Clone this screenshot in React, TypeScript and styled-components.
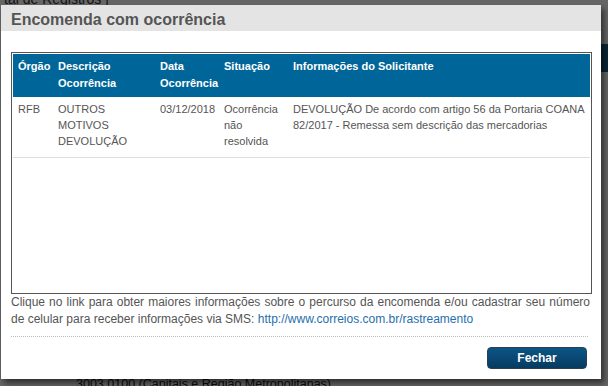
import styled, { createGlobalStyle } from 'styled-components';

const GlobalStyle = createGlobalStyle`
  html, body {
    margin: 0;
    padding: 0;
    width: 608px;
    height: 386px;
    overflow: hidden;
    background: #ffffff;
    font-family: "Liberation Sans", Arial, sans-serif;
  }
`;

const Page = styled.div`
  position: relative;
  width: 608px;
  height: 386px;
  overflow: hidden;
  background: #fff;
`;

const PageCrumb = styled.div`
  padding: 0 0 0 4px;
  margin-top: -9px;
  font-size: 14px;
  color: #333;
`;

const PageBar = styled.div`
  margin: 37px 0 0 auto;
  width: 20px;
  height: 28px;
  background: #1a5f8a;
`;

const PageFooter = styled.div`
  position: absolute;
  left: 76px;
  top: 377px;
  font-size: 12.5px;
  color: #222;
`;

const Overlay = styled.div`
  position: absolute;
  inset: 0;
  background: rgba(0, 0, 0, 0.6);
`;

const Modal = styled.div`
  position: absolute;
  left: 1px;
  top: 5px;
  width: 600px;
  height: 374px;
  background: #fff;
  box-shadow: 3px 4px 6px rgba(0, 0, 0, 0.55);
  display: flex;
  flex-direction: column;
`;

const TitleBar = styled.div`
  height: 26px;
  box-sizing: border-box;
  background: #e4e4e4;
  padding: 4px 0 0 10px;
  display: flex;
  align-items: center;
  font-size: 16px;
  font-weight: bold;
  color: #555;
`;

const Body = styled.div`
  padding: 21px 9px 0 10px;
  display: flex;
  flex-direction: column;
`;

const TableBox = styled.div`
  height: 238px;
  border: 1px solid #555;
  padding: 1px;
`;

const Table = styled.table`
  width: 100%;
  border-collapse: collapse;
  table-layout: fixed;
  font-size: 11px;
`;

const HeadCell = styled.th`
  background: #006699;
  color: #fff;
  font-weight: bold;
  text-align: left;
  vertical-align: top;
  line-height: 17px;
  padding: 4px 5px 5px;
`;

const Cell = styled.td`
  color: #555;
  vertical-align: top;
  line-height: 16px;
  padding: 4px 5px 8px;
  border-bottom: 1px solid #ddd;
`;

const Note = styled.p`
  margin: 0 2px 0 0;
  font-size: 12px;
  line-height: 17px;
  color: #555;
  text-align: justify;
`;

const Link = styled.a`
  color: #1f6fab;
  text-decoration: none;
  line-height: 17px;
`;

const Divider = styled.div`
  margin: 8px 4px 0 0;
  border-top: 1px dotted #bbb;
`;

const Footer = styled.div`
  display: flex;
  justify-content: flex-end;
  padding: 10px 5px 0 0;
`;

const Button = styled.button`
  width: 100px;
  height: 22px;
  border: 1px solid #2a3f52;
  border-radius: 4px;
  background: linear-gradient(#0c5585, #063b61);
  color: #fff;
  font-family: "Liberation Sans", Arial, sans-serif;
  font-size: 12px;
  font-weight: bold;
  cursor: pointer;
`;

const columns = [
  { title: 'Órgão', width: 40 },
  { title: 'Descrição Ocorrência', width: 102 },
  { title: 'Data Ocorrência', width: 64 },
  { title: 'Situação', width: 69 },
  { title: 'Informações do Solicitante' },
];

const row = [
  'RFB',
  'OUTROS MOTIVOS DEVOLUÇÃO',
  '03/12/2018',
  'Ocorrência não resolvida',
  'DEVOLUÇÃO De acordo com artigo 56 da Portaria COANA 82/2017 - Remessa sem descrição das mercadorias',
];

export default function App() {
  return (
    <Page>
      <GlobalStyle />
      <PageCrumb>tal de Registros |</PageCrumb>
      <PageBar />
      <PageFooter>3003 0100 (Capitais e Região Metropolitanas)</PageFooter>
      <Overlay />
      <Modal>
        <TitleBar>Encomenda com ocorrência</TitleBar>
        <Body>
          <TableBox>
            <Table>
              <colgroup>
                {columns.map((c, i) => (
                  <col key={i} style={c.width ? { width: c.width } : undefined} />
                ))}
              </colgroup>
              <thead>
                <tr>
                  {columns.map((c, i) => (
                    <HeadCell key={i}>{c.title}</HeadCell>
                  ))}
                </tr>
              </thead>
              <tbody>
                <tr>
                  {row.map((v, i) => (
                    <Cell key={i}>{v}</Cell>
                  ))}
                </tr>
              </tbody>
            </Table>
          </TableBox>
          <Note>
            Clique no link para obter maiores informações sobre o percurso da encomenda e/ou cadastrar seu número
            de celular para receber informações via SMS:{' '}
            <Link href="#">http://www.correios.com.br/rastreamento</Link>
          </Note>
          <Divider />
          <Footer>
            <Button>Fechar</Button>
          </Footer>
        </Body>
      </Modal>
    </Page>
  );
}
